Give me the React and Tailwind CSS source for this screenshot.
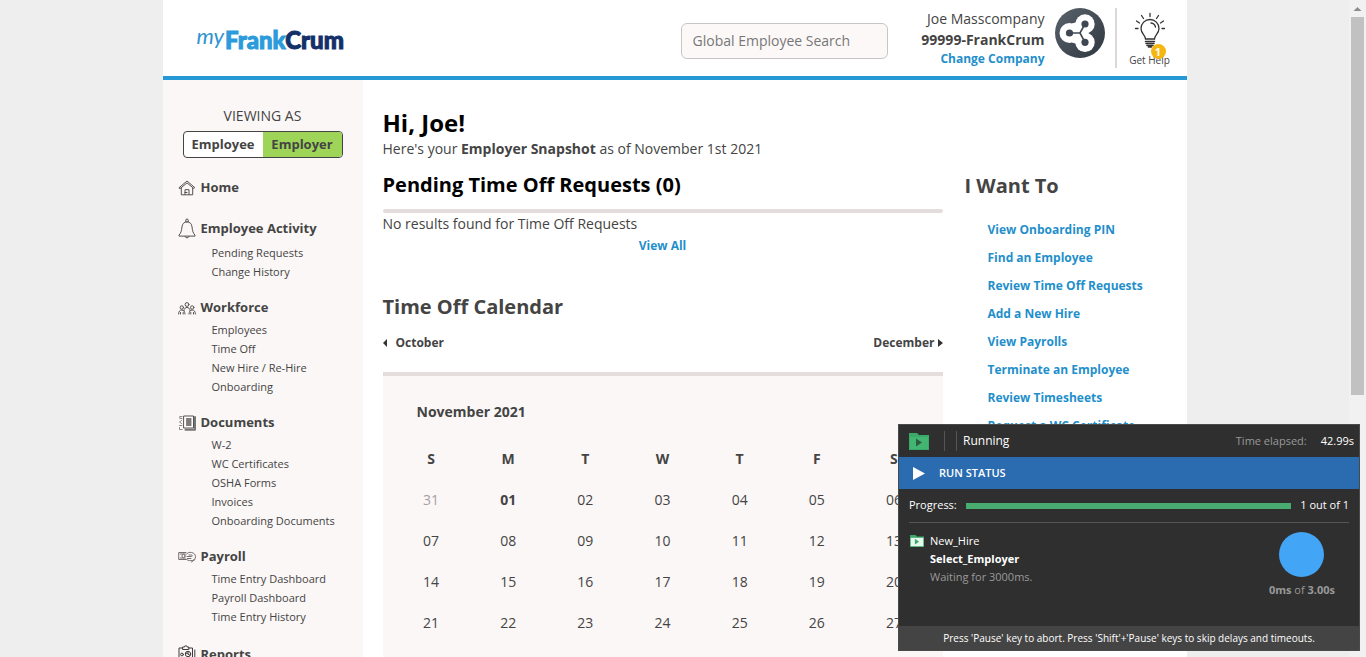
import React from "react";

const stroke = { fill: "none", stroke: "#55504f", strokeWidth: 1, strokeLinejoin: "round", strokeLinecap: "round" };

function HomeIcon() {
  return (
    <svg width="18" height="16" viewBox="0 0 18 16" aria-hidden="true" {...stroke}>
      <path d="M1.2 7.6 9 1l7.8 6.6-1 .9L9 2.9 2.2 8.5z" />
      <path d="M3.3 8v6.8h11.4V8" />
      <path d="M7 14.5V9.7h4v4.8M7 12.5h2" />
    </svg>
  );
}

function BellIcon() {
  return (
    <svg width="18" height="22" viewBox="0 0 18 22" aria-hidden="true" {...stroke}>
      <path d="M7.8 3.8V2.2a1.2 1.2 0 0 1 2.4 0v1.6" />
      <path d="M9 3.8c-3 0-4.6 2-5 5-.5 4-1 6.200-3 8.400v.9h16v-.9c-2-2.200-2.500-4.400-3-8.400-.4-3-2-5-5-5z" />
      <path d="M7 18.400a2.100 2.100 0 0 0 4 0" />
    </svg>
  );
}

function PeopleIcon() {
  return (
    <svg width="18" height="13" viewBox="0 0 18 13" aria-hidden="true" {...stroke}>
      <circle cx="9" cy="2.500" r="1.900" />
      <path d="M6 8.500c.2-2 1.200-3 3-3s2.800 1 3 3" />
      <circle cx="3.800" cy="5.500" r="1.700" />
      <path d="M.6 12c0-2.500 1.200-4 3.200-4s3 1.500 3.200 4M2.500 12v-1.500M5.200 12v-1.500" />
      <circle cx="14.200" cy="5.500" r="1.700" />
      <path d="M11 12c.2-2.500 1.200-4 3.200-4s3.200 1.500 3.200 4M12.800 12v-1.500M15.500 12v-1.500" />
    </svg>
  );
}

function DocumentsIcon() {
  return (
    <svg width="18" height="16" viewBox="0 0 18 16" aria-hidden="true" {...stroke}>
      <path d="M6 1h9.500v12H6z" fill="#fff" />
      <path d="M17 2v12.800H7.500" stroke="#777" strokeWidth="2" />
      <path d="M8.500 4h4.500M8.500 6h4.500M8.500 8h4.500M8.500 10h4.500" strokeWidth="1.300" />
      <path d="M4 1.500H1.800v2H4M3.500 5.500l-2 1.500 2 1.500M1.500 10.500H4M1.500 12.500v2H4" stroke="#888" />
    </svg>
  );
}

function PayrollIcon() {
  return (
    <svg width="18" height="12" viewBox="0 0 18 12" aria-hidden="true" {...stroke} stroke="#77706f">
      <path d="M8 1.500H.7v7H8M2.200 3h5M2.200 7h5" />
      <ellipse cx="5.500" cy="5" rx="1.500" ry="1.800" />
      <path d="M8 3.500c1.500-2 3.500-2.500 5.500-2 2.500.5 4 2 4 4.200s-1.800 4-4.500 4c-2.200 0-4-.6-5-1.700M9 5.500h4.500c1 0 1-1.500 0-1.500H11M9.500 7.500h3.500M17 8.500l-3.500 2.500" />
    </svg>
  );
}

function ReportsIcon() {
  return (
    <svg width="18" height="20" viewBox="0 0 18 20" aria-hidden="true" {...stroke} stroke="#3f3b3b">
      <path d="M4.500 3H1v15.500h13.500V3H11M16.800 5v14.500" />
      <path d="M5 2h1.500a1.300 1.300 0 0 1 2.600 0h1.700v2.500H5z" />
      <circle cx="4" cy="9.500" r="1.400" />
      <circle cx="10" cy="9" r="2.700" />
      <path d="M10 6.500V9l2 1.500M8 8l2 1M3 15h9" />
    </svg>
  );
}

const sections = [
  { title: "Home", Icon: HomeIcon, row: "h-[22px]", links: [] },
  { title: "Employee Activity", Icon: BellIcon, row: "h-[26px]", links: ["Pending Requests", "Change History"] },
  { title: "Workforce", Icon: PeopleIcon, row: "h-[22px]", links: ["Employees", "Time Off", "New Hire / Re-Hire", "Onboarding"] },
  { title: "Documents", Icon: DocumentsIcon, row: "h-[22px]", links: ["W-2", "WC Certificates", "OSHA Forms", "Invoices", "Onboarding Documents"] },
  { title: "Payroll", Icon: PayrollIcon, row: "h-[22px]", links: ["Time Entry Dashboard", "Payroll Dashboard", "Time Entry History"] },
  { title: "Reports", Icon: ReportsIcon, row: "h-[26px]", links: [] },
];

const actions = [
  "View Onboarding PIN",
  "Find an Employee",
  "Review Time Off Requests",
  "Add a New Hire",
  "View Payrolls",
  "Terminate an Employee",
  "Review Timesheets",
  "Request a WC Certificate",
];

const weekDays = ["S", "M", "T", "W", "T", "F", "S"];
const weeks = [
  ["31", "01", "02", "03", "04", "05", "06"],
  ["07", "08", "09", "10", "11", "12", "13"],
  ["14", "15", "16", "17", "18", "19", "20"],
  ["21", "22", "23", "24", "25", "26", "27"],
  ["28", "29", "30", "01", "02", "03", "04"],
];

function dayClass(week, day) {
  if (week === 0 && day === 0) return "text-[#a5a1a1]";
  if (week === 0 && day === 1) return "font-bold";
  if (week === 4 && day > 2) return "text-[#a5a1a1]";
  return "";
}

function Header() {
  return (
    <header className="flex h-20 shrink-0 items-start border-b-4 border-[#2499d6] bg-white">
      <a href="#home" className="ml-[34px] mt-[22px] flex items-start leading-9" aria-label="myFrankCrum">
        <span className="mr-px font-['Lato'] text-[22px] italic leading-7 text-[#2e93cf]">my</span>
        <span className="font-['Lato'] text-[24px] font-black text-[#2b9bdb] [-webkit-text-stroke:1px]">
          Frank<span className="text-[#14306b]">Crum</span>
        </span>
      </a>
      <div className="ml-auto mt-[23px]">
        <input
          type="text"
          aria-label="Global Employee Search"
          placeholder="Global Employee Search"
          className="h-9 w-[207px] rounded-md border border-[#c9c5c6] bg-[#fcf8f8] px-[11px] pb-[2px] text-[14px] placeholder:text-[#777]"
        />
      </div>
      <div className="mt-2 w-[157px] text-right text-[14px]">
        <div className="leading-[21px]">Joe Masscompany</div>
        <div className="font-bold leading-[21px]">99999-FrankCrum</div>
        <a href="#company" className="block text-[12px] font-bold leading-[18px] text-[#1f8fcb]">Change Company</a>
      </div>
      <svg className="ml-[10px] mt-2 shrink-0" width="50" height="50" viewBox="0 0 50 50" role="img" aria-label="Company">
        <defs>
          <linearGradient id="badge" x1="0" y1="0" x2="1" y2="1">
            <stop offset="0" stopColor="#5a626c" />
            <stop offset="1" stopColor="#2f3741" />
          </linearGradient>
        </defs>
        <circle cx="25" cy="25" r="25" fill="url(#badge)" />
        <g fill="#fff">
          <circle cx="14.500" cy="25" r="10" />
          <circle cx="30" cy="16" r="9.700" />
          <circle cx="30" cy="34.300" r="9.700" />
          <path d="M17 15.500 22 14h9l2 11-2 11h-9l-5-1.500z" />
        </g>
        <path d="M14.500 25H25l5-9M25 25l5 9.300" fill="none" stroke="#3f4852" strokeWidth="1.600" />
        <g fill="#3f4852">
          <circle cx="14.500" cy="25" r="3.600" />
          <circle cx="30" cy="16" r="3.600" />
          <circle cx="30" cy="34.300" r="3.600" />
        </g>
      </svg>
      <div className="ml-[10px] mt-2 h-[60px] w-[2px] bg-[#d9d7d7]" />
      <button type="button" className="relative ml-3 mr-4 mt-3 flex w-[42px] flex-col items-center">
        <svg width="32" height="38" viewBox="0 0 32 38" fill="none" stroke="#333" strokeWidth="1.300" strokeLinecap="round" aria-hidden="true">
          <path d="M11.500 27c0-3.500-4.500-5.500-4.500-10.500a9 9 0 0 1 18 0c0 5-4.500 7-4.500 10.500z" />
          <path d="M17 11c2.500.3 4 1.800 4.500 4" />
          <path d="M11.500 29.500h9M12 31.500h8M13 33.500h6M14.500 35h3" strokeWidth="1.600" />
          <path d="M16 1.500v3M7.500 3.500l2 3M24.500 3.500l-2 3M2.500 9l3 2M29.500 9l-3 2M1.500 16.500h2.500M28 16.500h2.500" />
        </svg>
        <span className="mt-[3px] whitespace-nowrap text-[10px] leading-[14px]">Get Help</span>
        <span className="absolute left-[22px] top-[32px] flex size-[15px] items-center justify-center rounded-full bg-[#f5b70f] text-[11px] font-bold leading-none text-white">1</span>
      </button>
    </header>
  );
}

function Sidebar() {
  return (
    <aside className="w-[200px] shrink-0 bg-[#fbf7f6] px-[15px] pt-[26px]">
      <div className="text-center text-[14px] leading-5">VIEWING AS</div>
      <div className="mx-[5px] mt-[5px] flex h-[27px] overflow-hidden rounded border border-[#444] bg-white text-[13px] font-bold">
        <button type="button" className="flex-1">Employee</button>
        <button type="button" className="flex-1 bg-[#9ed458]">Employer</button>
      </div>
      <nav className="mt-[19px]">
        {sections.map(({ title, Icon, row, links }) => (
          <section key={title} className="mb-4">
            <a href={"#" + title} className={"flex items-center gap-[5px] text-[13px] font-bold " + row}>
              <Icon />
              {title}
            </a>
            <ul className="ml-[34px] pt-px text-[11px] leading-[19px]">
              {links.map((link) => (
                <li key={link}><a href={"#" + link}>{link}</a></li>
              ))}
            </ul>
          </section>
        ))}
      </nav>
    </aside>
  );
}

function Snapshot() {
  return (
    <main className="ml-5 min-w-0 flex-1 pt-[27px] text-[14px]">
      <h1 className="text-[24px] font-bold leading-8 text-black">Hi, Joe!</h1>
      <p className="leading-5">Here's your <b>Employer Snapshot</b> as of November 1st 2021</p>
      <h2 className="mt-3 text-[20px] font-bold leading-7 text-black">Pending Time Off Requests (0)</h2>
      <div className="mt-[10px] h-1 rounded-sm bg-[#e5dddd]" />
      <p className="mt-px leading-5">No results found for Time Off Requests</p>
      <div className="mt-[2px] text-center text-[12px] font-bold leading-5 text-[#1f8fcb]">
        <a href="#all">View All</a>
      </div>
      <h2 className="mt-[37px] text-[20px] font-bold leading-7">Time Off Calendar</h2>
      <div className="mt-3 flex justify-between text-[12px] font-bold leading-5">
        <button type="button" className="flex items-center gap-2">
          <svg width="5" height="8" viewBox="0 0 5 8" aria-hidden="true"><path d="M4 0v8L0 4z" fill="#333" /></svg>
          October
        </button>
        <button type="button" className="flex items-center gap-[3px]">
          December
          <svg width="5" height="8" viewBox="0 0 5 8" aria-hidden="true"><path d="M0 0v8l5-4z" fill="#333" /></svg>
        </button>
      </div>
      <div className="mt-[19px] border-t-4 border-[#e5dddd] bg-[#fbf7f6] px-[10px] pb-6 pt-[26px]">
        <h3 className="ml-6 text-[14px] font-bold leading-5">November 2021</h3>
        <table className="mt-4 w-full table-fixed text-center">
          <thead>
            <tr className="h-[41px]">
              {weekDays.map((d, i) => <th key={i} className="p-0 font-bold">{d}</th>)}
            </tr>
          </thead>
          <tbody>
            {weeks.map((week, w) => (
              <tr key={w} className="h-[41px]">
                {week.map((d, i) => <td key={i} className={"p-0 " + dayClass(w, i)}>{d}</td>)}
              </tr>
            ))}
          </tbody>
        </table>
      </div>
    </main>
  );
}

function Actions() {
  return (
    <aside className="ml-[22px] w-[222px] shrink-0 pt-[92px]">
      <h2 className="text-[20px] font-bold leading-7">I Want To</h2>
      <ul className="ml-[23px] mt-4 text-[12px] font-bold leading-7 text-[#1f8fcb]">
        {actions.map((a) => <li key={a}><a href={"#" + a}>{a}</a></li>)}
      </ul>
    </aside>
  );
}

function FolderIcon({ size, body, arrow }) {
  return (
    <svg width={size} height={size * 0.85} viewBox="0 0 20 17" aria-hidden="true">
      <path d="M0 0h8l2 2h10v15H0z" fill="#3aa968" />
      <path d="M1 4h18v12H1z" fill={body} />
      <path d="M7 5.500v8l6-4z" fill={arrow} />
    </svg>
  );
}

function RunPanel() {
  return (
    <section className="fixed bottom-[6px] right-[6px] w-[462px] border border-[#4a4a4a] bg-[#2f2f2f] text-[11px] text-white" aria-label="Run status">
      <div className="flex h-8 items-center pl-[10px] pr-[5px]">
        <FolderIcon size={20} body="#43b573" arrow="#2b5c3d" />
        <span className="ml-[15px] h-5 w-px bg-[#555]" />
        <span className="ml-[11px] h-5 w-px bg-[#555]" />
        <span className="ml-[6px] text-[12px]">Running</span>
        <span className="ml-auto text-[#999]">Time elapsed:</span>
        <span className="ml-[14px]">42.99s</span>
      </div>
      <div className="flex h-8 items-center bg-[#2b6cb0] pl-[14px] font-semibold">
        <svg width="12" height="13" viewBox="0 0 12 13" aria-hidden="true"><path d="M0 0v13l12-6.500z" fill="#fff" /></svg>
        <span className="ml-[14px]">RUN STATUS</span>
      </div>
      <div className="mx-[10px] flex h-[34px] items-center gap-[9px] border-b border-[#555]">
        <span>Progress:</span>
        <div className="h-[6px] flex-1 bg-[#48ab70]" role="progressbar" aria-valuenow={1} aria-valuemax={1} />
        <span>1 out of 1</span>
      </div>
      <div className="flex h-[103px] justify-between pl-[11px] pr-6 pt-[9px]">
        <div className="flex gap-[6px] leading-[18px]">
          <div className="pt-[3px]"><FolderIcon size={14} body="#e8f7ee" arrow="#3aa968" /></div>
          <div>
            <div>New_Hire</div>
            <div className="font-bold">Select_Employer</div>
            <div className="text-[#999]">Waiting for 3000ms.</div>
          </div>
        </div>
        <div className="flex flex-col items-center">
          <div className="size-[45px] rounded-full bg-[#42a5f5]" />
          <div className="mt-1 leading-[18px] text-[#999]"><b>0ms</b> of <b>3.00s</b></div>
        </div>
      </div>
      <div className="flex h-6 items-center justify-center bg-[#444] text-[10px]">
        Press 'Pause' key to abort. Press 'Shift'+'Pause' keys to skip delays and timeouts.
      </div>
    </section>
  );
}

export default function App() {
  return (
    <div className="flex h-screen overflow-hidden bg-[#eee] font-['Open_Sans','Noto_Sans',sans-serif] text-[#444]">
      <div className="min-w-0 flex-1">
        <div className="mx-auto flex min-h-screen max-w-[1024px] flex-col bg-white">
          <Header />
          <div className="flex flex-1">
            <Sidebar />
            <Snapshot />
            <Actions />
          </div>
        </div>
      </div>
      <div className="flex w-[17px] shrink-0 flex-col items-center bg-[#f1f1f1]" aria-hidden="true">
        <svg width="17" height="17" viewBox="0 0 17 17"><path d="M4.500 11h8l-4-4z" fill="#8c8c8c" /></svg>
        <div className="h-23/40 w-[13px] bg-[#c1c1c1]" />
      </div>
      <RunPanel />
    </div>
  );
}
